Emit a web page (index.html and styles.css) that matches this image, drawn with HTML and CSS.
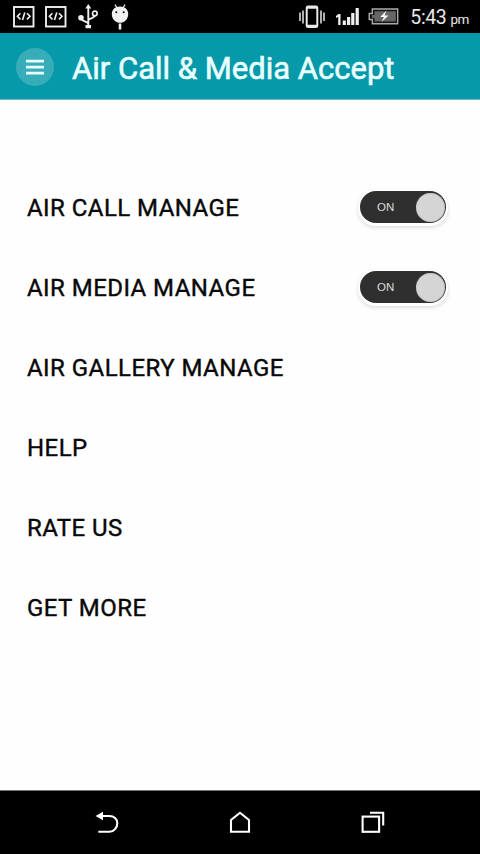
FILE: index.html
```
<!DOCTYPE html>
<html lang="en">
<head>
    <meta charset="UTF-8">
    <meta name="viewport" content="width=device-width, initial-scale=1.0">
    <title>Air Call &amp; Media Accept</title>
    <link rel="stylesheet" href="styles.css">
</head>
<body>
    <div class="statusbar">
        <div class="notifications">
            <svg width="22" height="22" viewBox="0 0 22 22" fill="none" stroke="#f0f0f0">
                <rect x="1" y="1" width="19.5" height="19.5" stroke-width="1.9"/>
                <path d="M7.4 7.2L4.4 10.3L7.4 13.4M14 7.2L17 10.3L14 13.4M11.8 6.5L9.5 14" stroke-width="1.6"/>
            </svg>
            <svg width="22" height="22" viewBox="0 0 22 22" fill="none" stroke="#f0f0f0">
                <rect x="1" y="1" width="19.5" height="19.5" stroke-width="1.9"/>
                <path d="M7.4 7.2L4.4 10.3L7.4 13.4M14 7.2L17 10.3L14 13.4M11.8 6.5L9.5 14" stroke-width="1.6"/>
            </svg>
            <svg class="usb" width="20" height="26" viewBox="0 0 20 26" fill="none" stroke="#f0f0f0" stroke-width="1.9">
                <path d="M10.3 3V22M3 14C3 17.5 10.3 17 10.3 20M10.3 16.5C10.3 14 17 14.5 17 11"/>
                <circle cx="16.8" cy="9.5" r="2.3" stroke-width="1.7"/>
                <circle cx="3" cy="13.8" r="2.8" fill="#f0f0f0" stroke="none"/>
                <path d="M10.3 0L13.3 4.5H7.3ZM7.5 21H13V24.3H7.5Z" fill="#f0f0f0" stroke="none"/>
            </svg>
            <svg class="droid" width="18" height="26" viewBox="0 0 18 26">
                <path d="M4 0.5L6.5 5M14 0.5L11.5 5" stroke="#f0f0f0" stroke-width="1.3"/>
                <path d="M9 2.5C14 2.5 17.2 5.5 17.2 10C17.2 15.5 13 18.8 9 18.8S0.8 15.5 0.8 10C0.8 5.5 4 2.5 9 2.5Z" fill="#f0f0f0"/>
                <path d="M9 19.5V25.5" stroke="#f0f0f0" stroke-width="2.6"/>
                <circle cx="5.3" cy="8.3" r="1"/>
                <circle cx="12.7" cy="8.3" r="1"/>
            </svg>
        </div>
        <div class="system">
            <svg width="26" height="24" viewBox="0 0 26 24" fill="none" stroke="#e8e8e8">
                <rect x="7.7" y="1.6" width="10.6" height="20.3" rx="1.5" stroke-width="2"/>
                <path d="M8 2.7H18M8 20.8H18" stroke-width="2.2"/>
                <path d="M1 7.5V16M4 5.5V18.5M22 5.5V18.5M25 7.5V16" stroke-width="1.5"/>
            </svg>
            <svg class="signal" width="24" height="18" viewBox="0 0 24 18" fill="#f0f0f0">
                <path d="M0 8L2.5 6H4.5V17H2.2V8.8L0 10ZM6.7 12.5H9.9V17H6.7ZM11 9H14.2V17H11ZM15.2 5H18.4V17H15.2ZM19.6 0H22.8V17H19.6Z"/>
            </svg>
            <svg class="battery" width="31" height="17" viewBox="0 0 31 17">
                <path d="M4.3 1H29.7V15.7H4.3V11.5H1.2V5.5H4.3Z" fill="#151515" stroke="#aaa" stroke-width="1.4"/>
                <path d="M6.5 3.2H27.8V13.6H6.5V10H4V7H6.5Z" fill="#666"/>
                <path d="M18.5 2.5L12.3 9H16L13.5 14L20.5 7.5H16.5Z" fill="#fff"/>
            </svg>
            <div class="clock"><span>5:43</span><span class="ampm">pm</span></div>
        </div>
    </div>

    <div class="header">
        <button class="menu">
            <svg width="18" height="16" viewBox="0 0 18 16">
                <path d="M0 2.2H18M0 8.2H18M0 14.2H18" stroke="#eaffff" stroke-width="2.8"/>
            </svg>
        </button>
        <h1>Air Call &amp; Media Accept</h1>
    </div>

    <div class="list">
        <div class="row">
            <p>AIR CALL MANAGE</p>
            <div class="switch"><span>ON</span><div class="knob"></div></div>
        </div>
        <div class="row">
            <p>AIR MEDIA MANAGE</p>
            <div class="switch"><span>ON</span><div class="knob"></div></div>
        </div>
        <div class="row"><p>AIR GALLERY MANAGE</p></div>
        <div class="row"><p>HELP</p></div>
        <div class="row"><p>RATE US</p></div>
        <div class="row"><p>GET MORE</p></div>
    </div>

    <div class="navbar">
        <svg width="24" height="24" viewBox="0 0 24 24">
            <path d="M6 5H14.5C19 5 22.3 8 22.3 12.2S19 20.8 14.5 20.8H3.3" fill="none" stroke="#fff" stroke-width="2.1"/>
            <path d="M0.5 5L8 0.8V9.2Z" fill="#fff"/>
        </svg>
        <svg width="24" height="24" viewBox="0 0 24 24" fill="none" stroke="#fff" stroke-width="2.1">
            <path d="M3 20.8V9L12 1.8L21 9V20.8Z"/>
        </svg>
        <svg width="24" height="24" viewBox="0 0 24 24" fill="none" stroke="#fff" stroke-width="2.1">
            <rect x="1.6" y="5.6" width="16.5" height="15.2"/>
            <path d="M9 1.7H22.2V14.5"/>
        </svg>
    </div>
</body>
</html>
```

FILE: styles.css
```
body {
    margin: 0;
    height: 854px;
    display: flex;
    flex-direction: column;
    overflow: hidden;
    background-color: #fefefe;
    color: #080808;
    font-family: Roboto, sans-serif;
}

svg {
    display: block;
    flex-shrink: 0;
}

.statusbar {
    height: 33px;
    box-sizing: border-box;
    padding: 0 11px 0 13px;
    display: flex;
    justify-content: space-between;
    align-items: center;
    background-color: #000;
}

.notifications, .system {
    display: flex;
    align-items: center;
}

.notifications {
    gap: 10px;
}

.usb {
    margin-left: 1px;
}

.droid {
    margin-left: 3px;
}

.signal {
    margin-left: 11px;
}

.battery {
    margin-left: 8px;
}

.clock {
    display: flex;
    align-items: baseline;
    gap: 4px;
    margin-left: 11px;
    padding-top: 3px;
    color: #e8e8e8;
    font-size: 19.5px;
    line-height: 24px;
    letter-spacing: -0.4px;
}

.ampm {
    font-size: 13.5px;
}

.header {
    height: 67px;
    box-sizing: border-box;
    padding-left: 16px;
    display: flex;
    align-items: center;
    background-color: #0599a9;
    border-bottom: 1px solid #70bfc8;
}

.menu {
    width: 38px;
    height: 38px;
    margin-top: 1px;
    padding: 0;
    border: none;
    border-radius: 50%;
    display: flex;
    align-items: center;
    justify-content: center;
    background-color: #38adba;
}

h1 {
    margin: 5px 0 0 18px;
    color: #eaffff;
    font-size: 31px;
    font-weight: 400;
    line-height: 36px;
    white-space: nowrap;
    -webkit-text-stroke: 0.6px #eaffff;
}

.list {
    flex: 1;
    padding: 68px 34px 0 27px;
}

.row {
    height: 80px;
    display: flex;
    align-items: center;
    justify-content: space-between;
}

.row p {
    margin: 0;
    font-size: 24px;
    line-height: 28px;
    letter-spacing: 0.45px;
    -webkit-text-stroke: 0.4px #080808;
}

.switch {
    width: 86px;
    height: 32px;
    box-sizing: border-box;
    padding: 0 1px 0 17px;
    margin-top: -2px;
    display: flex;
    align-items: center;
    justify-content: space-between;
    background-color: #2f2f2f;
    border-radius: 16px;
    box-shadow: 0 1px 0 2px #fff, 0 3px 4px 2px #ddd;
}

.switch span {
    color: #ddd;
    font-family: "Liberation Sans", sans-serif;
    font-size: 11.5px;
}

.knob {
    width: 29px;
    height: 29px;
    border-radius: 50%;
    background-color: #d5d5d5;
    box-shadow: inset 0 0 2px #aaa;
}

.navbar {
    height: 64px;
    box-sizing: border-box;
    padding: 0 95px;
    display: flex;
    align-items: center;
    justify-content: space-between;
    background-color: #000;
    border-top: 1px solid #777;
}
```
